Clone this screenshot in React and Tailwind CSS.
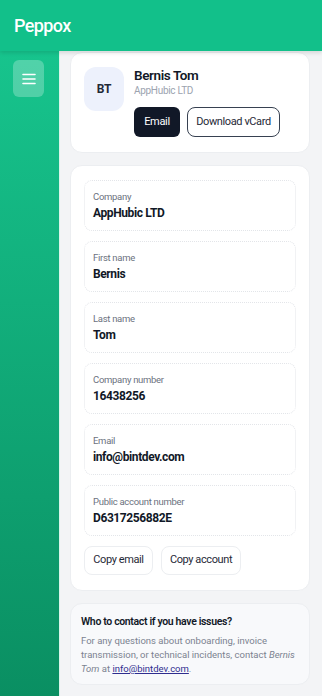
import React from "react";

const fields = [
    { label: "Company", value: "AppHubic LTD" },
    { label: "First name", value: "Bernis" },
    { label: "Last name", value: "Tom" },
    { label: "Company number", value: "16438256" },
    { label: "Email", value: "info@bintdev.com" },
    { label: "Public account number", value: "D6317256882E" },
];

const App = () => {
    return (
        <div className="w-[322px] h-[696px] overflow-hidden flex flex-col bg-[#f3f4f6] font-['Roboto',sans-serif] text-[#111827]">
            {/* Header */}
            <header className="relative z-10 h-[51px] shrink-0 bg-[#12c08a] flex items-center px-[14px] shadow-[0_2px_4px_rgba(0,0,0,0.12)]">
                <h1 className="text-[18px] font-medium tracking-[-0.6px] text-white">Peppox</h1>
            </header>

            <div className="flex flex-1 min-h-0">
                {/* Sidebar */}
                <aside className="w-[60px] shrink-0 bg-gradient-to-b from-[#17c48d] to-[#0a8f62] border-r border-[#d9f5ea] pt-[9px] pl-[13px]">
                    <button className="w-[31px] h-[37px] rounded-md bg-white/25 flex items-center justify-center">
                        <svg width="14" height="12" viewBox="0 0 14 12" fill="none" stroke="white" strokeWidth="1.6" strokeLinecap="round">
                            <path d="M1 1.5h12M1 6h12M1 10.5h12" />
                        </svg>
                    </button>
                </aside>

                {/* Main */}
                <main className="flex-1 pl-[10px] pr-[12px] pt-[1px] flex flex-col gap-[12px]">
                    {/* Profile card */}
                    <section className="bg-white border border-[#eceef1] rounded-xl px-[13px] pt-[14px] pb-[15px] flex gap-[10px]">
                        <div className="w-[40px] h-[44px] rounded-xl bg-[#edf1fc] flex items-center justify-center text-[12px] font-bold tracking-[-0.2px] text-[#1f2937]">
                            BT
                        </div>
                        <div className="flex flex-col">
                            <h2 className="text-[13.5px] font-semibold leading-[17px] tracking-[-0.4px] text-[#111827]">Bernis Tom</h2>
                            <p className="text-[10px] leading-[14px] tracking-[-0.3px] text-[#9ca3af]">AppHubic LTD</p>
                            <div className="flex gap-[7px] mt-[9px]">
                                <button className="w-[46px] h-[30px] rounded-md bg-[#111827] text-white text-[11px] tracking-[-0.3px]">Email</button>
                                <button className="w-[93px] h-[30px] rounded-lg border border-[#374151] bg-white text-[11px] tracking-[-0.4px] text-[#1f2937]">Download vCard</button>
                            </div>
                        </div>
                    </section>

                    {/* Details card */}
                    <section className="bg-white border border-[#eceef1] rounded-xl px-[13px] pt-[14px] pb-[15px] flex flex-col">
                        <div className="flex flex-col gap-[10px]">
                            {fields.map((f) => (
                                <div key={f.label} className="h-[51px] rounded-lg border border-dotted border-[#e3e5e9] px-[8px] pt-[9px]">
                                    <div className="text-[9.5px] leading-[13px] tracking-[-0.3px] text-[#6b7280]">{f.label}</div>
                                    <div className="text-[12px] leading-[17px] font-bold tracking-[-0.4px] text-[#111827] mt-[2px]">{f.value}</div>
                                </div>
                            ))}
                        </div>
                        <div className="flex gap-[8px] mt-[10px]">
                            <button className="w-[69px] h-[29px] rounded-lg border border-[#eceef1] bg-white text-[11px] tracking-[-0.4px] text-[#1f2937]">Copy email</button>
                            <button className="w-[80px] h-[29px] rounded-lg border border-[#eceef1] bg-white text-[11px] tracking-[-0.4px] text-[#1f2937]">Copy account</button>
                        </div>
                    </section>

                    {/* Contact card */}
                    <section className="bg-[#f8f9fb] border border-[#eceef1] rounded-xl px-[10px] pt-[11px] pb-[8px]">
                        <h3 className="text-[10.5px] font-semibold leading-[14px] tracking-[-0.35px] text-[#111827]">Who to contact if you have issues?</h3>
                        <p className="mt-[5px] text-[9.5px] leading-[14px] text-[#7b8290]">
                            For any questions about onboarding, invoice transmission, or technical incidents, contact <em>Bernis</em>{" "}
                            <em>Tom</em> at <a href="#" className="text-[#2f2d8f] underline">info@bintdev.com</a>.
                        </p>
                    </section>
                </main>
            </div>
        </div>
    );
};

export default App;
